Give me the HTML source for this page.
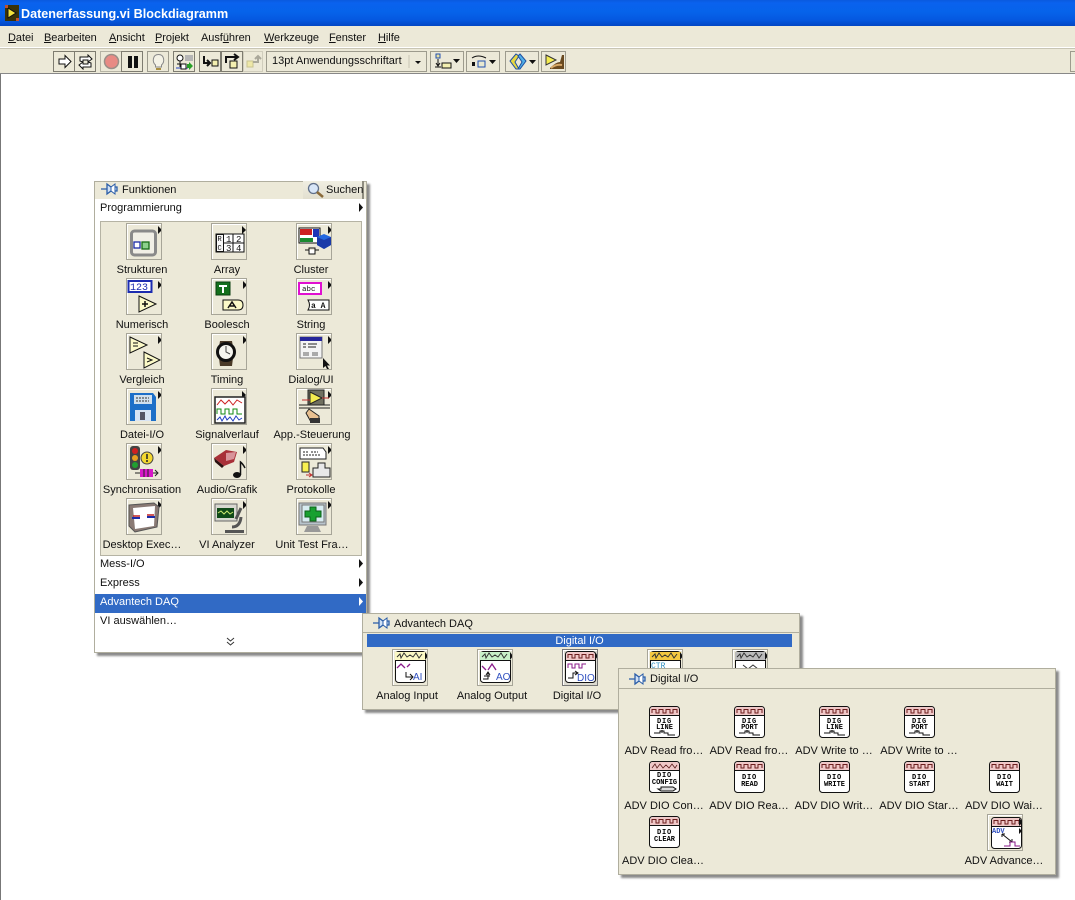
<!DOCTYPE html>
<html lang="de"><head><meta charset="utf-8"><title>Datenerfassung.vi Blockdiagramm</title>
<style>
html,body{margin:0;padding:0;background:#fff}
body{width:1075px;height:900px;position:relative;overflow:hidden;font:11px/14px "Liberation Sans",sans-serif;color:#111}
div,svg,span.a{position:absolute;display:block}
#title{left:0;top:0;width:1075px;height:26px;background:linear-gradient(#0a5ade 0,#0a62ee 3px,#0663ea 12px,#0558e0 20px,#0347c4 26px)}
#title span{position:absolute;left:21px;top:6px;font:bold 12.6px/16px "Liberation Sans",sans-serif;color:#fff;white-space:nowrap}
#menu{left:0;top:26px;width:1075px;height:22px;background:#ece9d8;border-bottom:1px solid #fff;box-sizing:border-box}
#menu span{position:absolute;top:5px;white-space:nowrap;letter-spacing:-.05px}
#tb{left:0;top:48px;width:1075px;height:26px;background:#ece9d8;border-bottom:1px solid #888;border-top:1px solid #c8c5b4;box-sizing:border-box}
#edge{left:0;top:74px;width:1px;height:826px;background:#777}
.k{top:51px;height:21px;background:#ece9d8;border:1px solid #7e7c70;box-sizing:border-box}
.p{background:#ece9d8;box-sizing:border-box;border:1px solid #b0ae9e;box-shadow:3px 3px 2px #8a8a8a}
.hd{background:#ece9d8;border-bottom:1px solid #b0ae9e;box-sizing:border-box}
.t{width:100px;text-align:center;height:14px;white-space:nowrap;margin-top:1px}
.l{white-space:nowrap;margin-top:1px}
.b{width:36px;height:37px;box-sizing:border-box;background:#ece9d8;border:1px solid #a7a598;box-shadow:inset 1px 1px 0 #fff}
.c{width:31px;height:33px}
text{font-family:"Liberation Mono",monospace}
.c text{text-anchor:middle;font-size:7px;font-weight:bold}
.c text.s{letter-spacing:.8px}
.ss{font-family:"Liberation Sans",sans-serif}
</style></head><body>

<svg width="0" height="0" style="position:absolute"><defs>
<symbol id="pin" viewBox="0 0 20 14"><path d="M1 7H7M7 2V12L11 9H17V5H11L7 2Z" fill="#cfe0f5" stroke="#2a5da8" stroke-width="1.3"/><path d="M11 5L15 2V12L11 9Z" fill="#fff" stroke="#2a5da8"/></symbol>
<symbol id="fr" viewBox="0 0 31 33"><rect x=".5" y=".5" width="30" height="31" rx="3" fill="#fff" stroke="#111"/><path d="M1 9V4Q1 1 4 1H27Q30 1 30 4V9Z" fill="#f0c8c8"/><path d="M1 9.500H30" stroke="#111"/><path d="M3 7V3.500H7V7H10V3.500H14V7H17V3.500H21V7H24V3.500H28V7" fill="none" stroke="#6b1d1d"/></symbol>
<symbol id="wire" viewBox="0 0 31 33"><path d="M5 27H11V25H15V27H19V29H26M13 24V27" fill="none" stroke="#111"/></symbol>
</defs></svg>

<div id="title">
<svg style="left:5px;top:5px" width="14" height="16"><rect width="14" height="16" fill="#3a3208"/><path d="M3 3L11 8L3 13Z" fill="#f4e23a" stroke="#111"/><path d="M0 0H3V3H0ZM11 13H14V16H11Z" fill="#c05030"/></svg>
<span>Datenerfassung.vi Blockdiagramm</span></div>

<div id="menu">
<span style="left:8px"><u>D</u>atei</span><span style="left:44px"><u>B</u>earbeiten</span><span style="left:109px"><u>A</u>nsicht</span><span style="left:155px"><u>P</u>rojekt</span><span style="left:201px">Ausf<u>ü</u>hren</span><span style="left:264px"><u>W</u>erkzeuge</span><span style="left:329px"><u>F</u>enster</span><span style="left:378px"><u>H</u>ilfe</span>
</div>
<div id="tb"></div><div id="edge"></div>

<!-- toolbar -->
<div class="k" style="left:53px;width:22px"><svg style="left:3px;top:2px" width="15" height="15"><path d="M2 5H8V1.500L14 7.500L8 13.500V10H2Z" fill="#fff" stroke="#111"/></svg></div>
<div class="k" style="left:74px;width:22px"><svg style="left:2px;top:2px" width="17" height="16"><path d="M3 7V3H11V1L15 5L11 8V6H6V8ZM14 9V13H6V15L2 11L6 8V10H11V8Z" fill="#fff" stroke="#111"/></svg></div>
<div class="k" style="left:100px;width:22px;border-color:#b5b3a4"><svg style="left:2px;top:1px" width="17" height="17"><circle cx="8.500" cy="8.500" r="7" fill="#e88a84" stroke="#9a8f88" stroke-width="1.5"/></svg></div>
<div class="k" style="left:121px;width:22px"><svg style="left:3px;top:2px" width="15" height="15"><path d="M3 2H7V14H3ZM9 2H13V14H9Z" fill="#111"/></svg></div>
<div class="k" style="left:147px;width:22px;border-color:#9d9b8d"><svg style="left:3px;top:1px" width="15" height="18"><path d="M4.500 12C1 9 1.500 1.500 7.500 1.500S14 9 10.500 12V14H4.500Z" fill="#f4f2e6" stroke="#888"/><path d="M5 15H10V17H5Z" fill="#a98f40"/></svg></div>
<div class="k" style="left:173px;width:22px"><svg style="left:1px;top:1px" width="19" height="18"><circle cx="5" cy="5" r="3" fill="#fff" stroke="#111"/><path d="M5 8V14M2 11H8" stroke="#111"/><rect x="10" y="2" width="8" height="6" fill="#b5b5b5"/><path d="M1 15H13" stroke="#2040c0"/><path d="M12 11H14V9L18 13L14 17V15H12Z" fill="#28a028"/><rect x="6" y="11" width="5" height="5" fill="#fff" stroke="#111"/></svg></div>
<div class="k" style="left:199px;width:22px"><svg style="left:2px;top:2px" width="18" height="15"><path d="M2 2V9H7M5 6L8 9L5 12" fill="none" stroke="#111" stroke-width="2"/><rect x="10" y="6" width="6" height="6" fill="#f3efb0" stroke="#111"/></svg></div>
<div class="k" style="left:221px;width:22px"><svg style="left:2px;top:1px" width="18" height="17"><path d="M2 10V4H13M10 1L14 4L10 7" fill="none" stroke="#111" stroke-width="2"/><rect x="6" y="8" width="7" height="7" fill="#f3efb0" stroke="#111"/></svg></div>
<div class="k" style="left:243px;width:20px;border-color:#d0cdbc"><svg style="left:1px;top:2px" width="18" height="15"><rect x="2" y="7" width="6" height="6" fill="#eee8a8" stroke="#c8c490"/><path d="M8 8H13V3M10 5L13 2L16 5" fill="none" stroke="#aaa89a" stroke-width="2"/></svg></div>
<div class="k" style="left:266px;width:161px;border-color:#9d9b8d"><span class="a" style="left:5px;top:2px;font-size:11px;white-space:nowrap">13pt Anwendungsschriftart</span><svg style="left:141px;top:1px" width="18" height="17"><path d="M1 2V15" stroke="#c8c5b4"/><path d="M7 8H13L10 11Z" fill="#111"/></svg></div>
<div class="k" style="left:430px;width:34px;border-color:#9d9b8d"><svg style="left:3px;top:1px" width="28" height="18"><rect x="2" y="1" width="4" height="4" fill="#e8e0a0" stroke="#2050b0"/><path d="M4 6V13M1 14H7M2 10L4 13L6 10" fill="none" stroke="#111"/><rect x="8" y="10" width="9" height="5" fill="#f3efb0" stroke="#111"/><path d="M19 6H26L22.500 10Z" fill="#111"/></svg></div>
<div class="k" style="left:466px;width:34px;border-color:#9d9b8d"><svg style="left:3px;top:1px" width="28" height="18"><path d="M2 5Q8 1 16 5" fill="none" stroke="#111"/><rect x="2" y="9" width="3" height="4" fill="#111"/><rect x="8" y="8" width="7" height="6" fill="#e8e8d0" stroke="#2050b0"/><path d="M19 7H26L22.500 11Z" fill="#111"/></svg></div>
<div class="k" style="left:505px;width:34px;border-color:#9d9b8d"><svg style="left:2px;top:1px" width="30" height="18"><path d="M8 1L2 8L8 16H11L7 9L11 3Z" fill="#e8d840" stroke="#2050a0"/><path d="M12 1L18 8L12 16H10L14 9L10 3Z" fill="#50b0e8" stroke="#2050a0"/><path d="M21 7H28L24.500 11Z" fill="#111"/></svg></div>
<div class="k" style="left:541px;width:25px;border-color:#9d9b8d"><svg style="left:1px;top:1px" width="22" height="18"><path d="M3 2L13 7L3 12Z" fill="#f4ec50" stroke="#333"/><path d="M7 15Q13 9 17 9L19 2H21V16H7Z" fill="#6a4a20"/><path d="M8 15Q13 11 19 12" stroke="#d8a868" stroke-width="2" fill="none"/></svg></div>
<div class="k" style="left:1070px;width:8px;border-color:#9d9b8d"></div>

<!-- Funktionen palette -->
<div class="p" style="left:94px;top:181px;width:273px;height:472px;background:#fff"></div>
<div class="hd" style="left:95px;top:182px;width:271px;height:17px;border:0"></div>
<svg style="left:100px;top:182px" width="20" height="14"><use href="#pin"/></svg>
<div class="l" style="left:122px;top:182px">Funktionen</div>
<div style="left:303px;top:181px;width:61px;height:18px;background:linear-gradient(#f0eee2,#e2dfcf);border-right:2px solid #8f8d80;box-sizing:border-box"></div>
<svg style="left:307px;top:182px" width="18" height="17"><circle cx="6.500" cy="6.500" r="5" fill="#d8e6f8" stroke="#5f6f8a" stroke-width="1.300"/><path d="M10 10L16 15" stroke="#8a6a3a" stroke-width="2.500"/></svg>
<div class="l" style="left:326px;top:182px">Suchen</div>
<div class="l" style="left:100px;top:200px">Programmierung</div>
<svg style="left:358px;top:203px" width="6" height="9"><path d="M1 0L5 4.500L1 9Z" fill="#111"/></svg>
<div style="left:100px;top:221px;background:#ece9d8;border:1px solid #b5b3a4;width:260px;height:333px"></div>

<!-- row 1 -->
<svg class="b" style="left:126px;top:223px"><path d="M31 2L35 6L31 10Z" fill="#111"/><rect x="4.500" y="7" width="24" height="24" rx="3" fill="#f1efe6" stroke="#8a8a8a" stroke-width="3"/><rect x="7" y="18" width="6" height="6" fill="#fff" stroke="#1c2ca8" stroke-width="1.300"/><rect x="15" y="18" width="7" height="7" fill="#8cd08c" stroke="#146a14" stroke-width="1.300"/></svg>
<svg class="b" style="left:211px;top:223px"><path d="M30 2L34 6L30 10Z" fill="#111"/><rect x="4" y="10" width="28" height="18" fill="#fff" stroke="#111"/><path d="M11.500 10V28M21 10V28M4 19H32" stroke="#111"/><rect x="4.500" y="10.500" width="7" height="17" fill="#f8f8f8" stroke="#111"/><text x="5.500" y="17" font-size="7" fill="#111">R</text><text x="5.500" y="26" font-size="7" fill="#111">C</text><text x="14" y="18" font-size="9" fill="#111">1</text><text x="24" y="18" font-size="9" fill="#111">2</text><text x="14" y="27" font-size="9" fill="#111">3</text><text x="24" y="27" font-size="9" fill="#111">4</text></svg>
<svg class="b" style="left:296px;top:223px"><path d="M31 2L35 6L31 10Z" fill="#111"/><rect x="2" y="4" width="21" height="15" fill="#fff" stroke="#111"/><rect x="3" y="5" width="12" height="6" fill="#cc2020"/><rect x="16" y="5" width="6" height="8" fill="#1d36b8"/><rect x="3" y="14" width="13" height="4" fill="#198a30"/><path d="M8 26H12V24H18V26H22M12 24V30H18V24" fill="#fff" stroke="#111"/><path d="M20 13L27 10L34 13V21L27 25L20 21Z" fill="#2468e0"/><path d="M20 13L27 16L34 13V21L27 25L20 21Z" fill="#1a3aa8"/></svg>
<!-- row 2 -->
<svg class="b" style="left:126px;top:278px"><path d="M31 2L35 6L31 10Z" fill="#111"/><rect x="1.500" y="2" width="23" height="11" fill="#fff" stroke="#1c2cb0" stroke-width="2"/><text x="3" y="11" font-size="10" fill="#1c2cb0">123</text><path d="M12 17L29 25L12 33Z" fill="#fcfac8" stroke="#111"/><path d="M15 25H21M18 22V28" stroke="#111" stroke-width="1.500"/></svg>
<svg class="b" style="left:211px;top:278px"><path d="M31 2L35 6L31 10Z" fill="#111"/><rect x="4" y="3" width="14" height="13" fill="#14701c" stroke="#0a400f"/><path d="M7 6H15V8H12V14H10V8H7Z" fill="#fff"/><path d="M11 21H26Q31 21 31 26T26 31H11Z" fill="#fcfac8" stroke="#111"/><path d="M16 29L20 23L24 29M18 27H22" fill="none" stroke="#111" stroke-width="1.500"/></svg>
<svg class="b" style="left:296px;top:278px"><path d="M31 2L35 6L31 10Z" fill="#111"/><rect x="2" y="4" width="22" height="11" fill="#fff" stroke="#e010d0" stroke-width="2"/><text x="5" y="12" font-size="7.500" fill="#111">abc</text><path d="M11 21H32V31H11Q14 26 11 21Z" fill="#fff" stroke="#111"/><text x="14" y="29" font-size="8" font-weight="bold" fill="#111">a A</text></svg>
<!-- row 3 -->
<svg class="b" style="left:126px;top:333px"><path d="M31 2L35 6L31 10Z" fill="#111"/><path d="M3 3L20 11L3 19Z" fill="#fcfac8" stroke="#111"/><path d="M6 9H11M6 12H11" stroke="#111"/><path d="M17 18L33 26L17 34Z" fill="#fcfac8" stroke="#111"/><path d="M20 24L25 26L20 28" fill="none" stroke="#111"/></svg>
<svg class="b" style="left:211px;top:333px"><path d="M31 2L35 6L31 10Z" fill="#111"/><path d="M8 7H20L21 13H7ZM7 24H21L20 32H8Z" fill="#4a3a28"/><circle cx="14" cy="18" r="8.500" fill="#f5f5ef" stroke="#111" stroke-width="3"/><path d="M14 12V18L18 20" stroke="#444" fill="none"/></svg>
<svg class="b" style="left:296px;top:333px"><path d="M31 2L35 6L31 10Z" fill="#111"/><rect x="3" y="3" width="22" height="21" fill="#f4f4f4" stroke="#777"/><rect x="3" y="3" width="22" height="4" fill="#26269a"/><path d="M6 10H9M11 10H20M6 13H9M11 13H19" stroke="#222"/><rect x="6" y="18" width="6" height="4" fill="#aaa"/><rect x="15" y="18" width="6" height="4" fill="#aaa"/><path d="M26 24V34L28.500 32L30.500 36L32 35L30 31.500H33Z" fill="#111"/></svg>
<!-- row 4 -->
<svg class="b" style="left:126px;top:388px"><path d="M31 2L35 6L31 10Z" fill="#111"/><path d="M3 4H26L29 8V32H3Z" fill="#1c6fc8"/><rect x="7" y="6" width="18" height="9" fill="#cfe0ee"/><path d="M9 9H22M9 12H22" stroke="#333" stroke-dasharray="2 1"/><rect x="8" y="21" width="16" height="11" fill="#d8e4f4"/><rect x="13" y="23" width="5" height="8" fill="#556"/></svg>
<svg class="b" style="left:211px;top:388px"><path d="M30 2L34 6L30 10Z" fill="#111"/><rect x="3" y="8" width="30" height="26" fill="#fff" stroke="#222" stroke-width="1.500"/><path d="M5 16L9 11L13 15L17 11L21 16L25 11L30 14" fill="none" stroke="#cc2020"/><path d="M5 25V20H9V25H13V20H17V25H21V20H25V25H30" fill="none" stroke="#108a10"/><path d="M5 31L8 28L10 32L13 27L15 31L18 28L21 32L24 27L27 31L30 29" fill="none" stroke="#2040c0"/></svg>
<svg class="b" style="left:296px;top:388px"><path d="M31 2L35 6L31 10Z" fill="#111"/><rect x="11" y="1" width="16" height="15" fill="#707060" stroke="#222"/><path d="M13 3L25 9L13 15Z" fill="#f4ec50" stroke="#222"/><path d="M5 11H13M25 9H32" stroke="#c03030"/><path d="M2 16H33M2 19H33" stroke="#222"/><path d="M12 20L22 27V33H14L9 24Z" fill="#e8c090" stroke="#222"/><rect x="13" y="29" width="10" height="5" fill="#333"/></svg>
<!-- row 5 -->
<svg class="b" style="left:126px;top:443px"><path d="M31 2L35 6L31 10Z" fill="#111"/><rect x="3" y="2" width="10" height="24" rx="3" fill="#444"/><circle cx="8" cy="7" r="3" fill="#d02020"/><circle cx="8" cy="14" r="3" fill="#e8a020"/><circle cx="8" cy="21" r="3" fill="#20a030"/><circle cx="20" cy="14" r="6" fill="#f4d830" stroke="#444"/><path d="M20 10V15M20 16V18" stroke="#222" stroke-width="1.500"/><path d="M8 29H13M26 29H31M28 26L31 29L28 32" fill="none" stroke="#222"/><rect x="13" y="25" width="13" height="8" fill="#d818c8"/><path d="M17 25V33M21 25V33" stroke="#222"/></svg>
<svg class="b" style="left:211px;top:443px"><path d="M31 2L35 6L31 10Z" fill="#111"/><path d="M2 14L14 6L25 8L22 18L12 22Z" fill="#a83038"/><path d="M14 9L24 8L22 15L14 17Z" fill="#d8949a"/><path d="M2 14L12 22L10 24L3 18Z" fill="#2a1010"/><ellipse cx="25" cy="31" rx="4" ry="3" fill="#111"/><path d="M28.500 31V18Q31 20 33 24" fill="none" stroke="#111" stroke-width="1.500"/></svg>
<svg class="b" style="left:296px;top:443px"><path d="M31 2L35 6L31 10Z" fill="#111"/><path d="M3 4H26L29 8V15H3Z" fill="#fff" stroke="#222"/><path d="M6 8H12M14 8H21M6 11H23" stroke="#222" stroke-dasharray="2 1"/><path d="M5 18H12V28H5Z" fill="#f8f050" stroke="#222"/><path d="M9 31H14M12 29L15 31L12 33" fill="none" stroke="#c03030"/><path d="M21 19H28V24H33V33H16V24H21Z" fill="#e8e8e8" stroke="#222"/></svg>
<!-- row 6 -->
<svg class="b" style="left:126px;top:498px"><path d="M31 2L35 6L31 10Z" fill="#111"/><path d="M2 6L27 4L32 8L30 28L8 33L2 27Z" fill="#8a7a74" stroke="#555"/><path d="M6 9L28 7L27 27L8 30Z" fill="#fff"/><path d="M5 19H13M20 18H28" stroke="#1c2ca8" stroke-width="2"/><path d="M6 17H13M20 16H27" stroke="#c02020" stroke-width="1.500"/></svg>
<svg class="b" style="left:211px;top:498px"><path d="M31 2L35 6L31 10Z" fill="#111"/><rect x="3" y="5" width="22" height="17" fill="#d8d8d0" stroke="#666"/><rect x="5" y="9" width="17" height="10" fill="#104a18"/><path d="M6 14L9 12L12 15L15 12L18 15L21 13" stroke="#cce870" fill="none"/><path d="M29 9L24 20M20 28Q28 28 29 18" stroke="#555" stroke-width="3" fill="none"/><path d="M13 31H32V34H13Z" fill="#555"/></svg>
<svg class="b" style="left:296px;top:498px"><path d="M31 2L35 6L31 10Z" fill="#111"/><path d="M2 4H29V26H2Z" fill="#b8c4cc" stroke="#777"/><rect x="5" y="6" width="22" height="17" fill="#d8ecf2" stroke="#777"/><path d="M13 8H19V12H24V18H19V22H13V18H8V12H13Z" fill="#18a030" stroke="#0b6018"/><path d="M10 27H21L24 33H7Z" fill="#999"/></svg>
<div class="t" style="left:92px;top:262px">Strukturen</div><div class="t" style="left:177px;top:262px">Array</div><div class="t" style="left:261px;top:262px">Cluster</div>
<div class="t" style="left:92px;top:317px">Numerisch</div><div class="t" style="left:177px;top:317px">Boolesch</div><div class="t" style="left:261px;top:317px">String</div>
<div class="t" style="left:92px;top:372px">Vergleich</div><div class="t" style="left:177px;top:372px">Timing</div><div class="t" style="left:261px;top:372px">Dialog/UI</div>
<div class="t" style="left:92px;top:427px">Datei-I/O</div><div class="t" style="left:177px;top:427px">Signalverlauf</div><div class="t" style="left:262px;top:427px">App.-Steuerung</div>
<div class="t" style="left:92px;top:482px">Synchronisation</div><div class="t" style="left:177px;top:482px">Audio/Grafik</div><div class="t" style="left:261px;top:482px">Protokolle</div>
<div class="t" style="left:92px;top:537px">Desktop Exec…</div><div class="t" style="left:177px;top:537px">VI Analyzer</div><div class="t" style="left:262px;top:537px">Unit Test Fra…</div>

<div class="l" style="left:100px;top:556px">Mess-I/O</div>
<svg style="left:358px;top:559px" width="6" height="9"><path d="M1 0L5 4.500L1 9Z" fill="#111"/></svg>
<div class="l" style="left:100px;top:575px">Express</div>
<svg style="left:358px;top:578px" width="6" height="9"><path d="M1 0L5 4.500L1 9Z" fill="#111"/></svg>
<div style="left:95px;top:594px;width:271px;height:19px;background:#316ac5"></div>
<div class="l" style="left:100px;top:594px;color:#fff">Advantech DAQ</div>
<svg style="left:358px;top:597px" width="6" height="9"><path d="M1 0L5 4.500L1 9Z" fill="#fff"/></svg>
<div class="l" style="left:100px;top:613px">VI auswählen…</div>
<svg style="left:226px;top:637px" width="9" height="9"><path d="M1 1L4.500 4L8 1M1 5L4.500 8L8 5" fill="none" stroke="#333"/></svg>

<!-- Advantech DAQ palette -->
<div class="p" style="left:362px;top:613px;width:438px;height:97px"></div>
<div class="hd" style="left:363px;top:614px;width:436px;height:19px"></div>
<svg style="left:372px;top:616px" width="20" height="14"><use href="#pin"/></svg>
<div class="l" style="left:394px;top:616px">Advantech DAQ</div>
<div style="left:367px;top:634px;width:425px;height:13px;background:#316ac5;color:#fff;text-align:center;line-height:15px;overflow:hidden">Digital I/O</div>
<svg class="b" style="left:392px;top:649px"><use href="#fr" x="1" y="1" width="33" height="33"/><rect x="2" y="2" width="31" height="8" fill="#fbf8c4"/><path d="M4 7L7 4L8 8L11 3L14 7L17 5L20 7L23 3L26 8L29 4" fill="none" stroke="#333"/><path d="M2 10.500H33" stroke="#111"/><path d="M4 18L8 14L12 18M14 17L17 14" fill="none" stroke="#8a1a8a" stroke-width="1.300"/><path d="M13 22V27H20M17 24L20 27L17 30" fill="none" stroke="#111"/><text class="ss" x="20" y="30" font-size="10" fill="#3050c0">AI</text><path d="M32 2L35 6L32 10Z" fill="#111"/></svg>
<svg class="b" style="left:477px;top:649px"><use href="#fr" x="1" y="1" width="33" height="33"/><rect x="2" y="2" width="31" height="8" fill="#c8f0c8"/><path d="M4 7L7 4L8 8L11 3L14 7L17 5L20 7L23 3L26 8L29 4" fill="none" stroke="#333"/><path d="M2 10.500H33" stroke="#111"/><path d="M4 16L8 20M10 20L14 14L18 20" fill="none" stroke="#8a1a8a" stroke-width="1.300"/><path d="M5 29H10V23M8 25L10 22L12 25M6 26H12" fill="none" stroke="#111"/><text class="ss" x="18" y="30" font-size="10" fill="#3050c0">AO</text><path d="M32 2L35 6L32 10Z" fill="#111"/></svg>
<svg class="b" style="left:562px;top:649px;background:#dcdad0;border-color:#777"><use href="#fr" x="1" y="1" width="33" height="33"/><path d="M5 18V14H9V18H12V14H16V18H19V14H23" fill="none" stroke="#8a1a8a"/><path d="M5 28H10V23H14M12 21L15 23L12 25" fill="none" stroke="#111"/><text class="ss" x="14" y="31" font-size="10" fill="#3050c0">DIO</text><path d="M32 2L35 6L32 10Z" fill="#111"/></svg>
<svg class="b" style="left:647px;top:649px"><use href="#fr" x="1" y="1" width="33" height="33"/><rect x="2" y="2" width="31" height="8" fill="#f4c840"/><path d="M4 7L7 4L8 8L11 3L14 7L17 5L20 7L23 3L26 8L29 4" fill="none" stroke="#333"/><path d="M2 10.500H33" stroke="#111"/><text x="3" y="18" font-size="8" fill="#3090c0">CTR</text><path d="M32 2L35 6L32 10Z" fill="#111"/></svg>
<svg class="b" style="left:732px;top:649px"><use href="#fr" x="1" y="1" width="33" height="33"/><rect x="2" y="2" width="31" height="8" fill="#bbbbbb"/><path d="M4 7L7 4L8 8L11 3L14 7L17 5L20 7L23 3L26 8L29 4" fill="none" stroke="#333"/><path d="M2 10.500H33" stroke="#111"/><path d="M10 15L15 19L20 15L25 19" fill="none" stroke="#333"/><path d="M32 2L35 6L32 10Z" fill="#111"/></svg>
<div class="t" style="left:357px;top:688px">Analog Input</div><div class="t" style="left:442px;top:688px">Analog Output</div><div class="t" style="left:527px;top:688px">Digital I/O</div>

<!-- Digital I/O palette -->
<div class="p" style="left:618px;top:668px;width:438px;height:207px"></div>
<div class="hd" style="left:619px;top:669px;width:436px;height:20px"></div>
<svg style="left:628px;top:672px" width="20" height="14"><use href="#pin"/></svg>
<div class="l" style="left:650px;top:671px">Digital I/O</div>

<svg class="c" style="left:649px;top:706px"><use href="#fr"/><use href="#wire"/><text class="s" x="15.500" y="17">DIG</text><text x="15.500" y="23">LINE</text></svg>
<svg class="c" style="left:734px;top:706px"><use href="#fr"/><use href="#wire"/><text class="s" x="15.500" y="17">DIG</text><text x="15.500" y="23">PORT</text></svg>
<svg class="c" style="left:819px;top:706px"><use href="#fr"/><use href="#wire"/><text class="s" x="15.500" y="17">DIG</text><text x="15.500" y="23">LINE</text></svg>
<svg class="c" style="left:904px;top:706px"><use href="#fr"/><use href="#wire"/><text class="s" x="15.500" y="17">DIG</text><text x="15.500" y="23">PORT</text></svg>
<svg class="c" style="left:649px;top:761px"><use href="#fr"/><rect x="2" y="2" width="27" height="7" fill="#f0c8c8"/><path d="M3 7L6 3L8 7L11 3L14 7L17 4L20 7L23 3L26 7L28 4" fill="none" stroke="#5b1b1b" stroke-width=".8"/><text class="s" x="15.500" y="16">DIO</text><text x="15.500" y="23">CONFIG</text><path d="M9 28H12V26H24L27 28L24 30H12Z" fill="#ddd" stroke="#111"/></svg>
<svg class="c" style="left:734px;top:761px"><use href="#fr"/><text class="s" x="15.500" y="18">DIO</text><text x="15.500" y="25">READ</text></svg>
<svg class="c" style="left:819px;top:761px"><use href="#fr"/><text class="s" x="15.500" y="18">DIO</text><text x="15.500" y="25">WRITE</text></svg>
<svg class="c" style="left:904px;top:761px"><use href="#fr"/><text class="s" x="15.500" y="18">DIO</text><text x="15.500" y="25">START</text></svg>
<svg class="c" style="left:989px;top:761px"><use href="#fr"/><text class="s" x="15.500" y="18">DIO</text><text x="15.500" y="25">WAIT</text></svg>
<svg class="c" style="left:649px;top:816px"><use href="#fr"/><text class="s" x="15.500" y="18">DIO</text><text x="15.500" y="25">CLEAR</text></svg>
<svg class="b" style="left:987px;top:814px"><use href="#fr" x="2" y="2" width="33" height="33"/><path d="M31 3L35 7L31 11ZM31 13L34 16L31 19Z" fill="#111"/><text x="4" y="18" font-size="7" font-weight="bold" fill="#3050c0">ADV</text><path d="M14 19L24 27M14 19H17M14 19V22M24 27H21M24 27V24" fill="none" stroke="#111"/><path d="M16 31H22V27H27V31H32" fill="none" stroke="#8a1a8a"/></svg>

<div class="t" style="left:614px;top:743px">ADV Read fro…</div><div class="t" style="left:699px;top:743px">ADV Read fro…</div><div class="t" style="left:784px;top:743px">ADV Write to …</div><div class="t" style="left:869px;top:743px">ADV Write to …</div>
<div class="t" style="left:614px;top:798px">ADV DIO Con…</div><div class="t" style="left:699px;top:798px">ADV DIO Rea…</div><div class="t" style="left:784px;top:798px">ADV DIO Writ…</div><div class="t" style="left:869px;top:798px">ADV DIO Star…</div><div class="t" style="left:954px;top:798px">ADV DIO Wai…</div>
<div class="t" style="left:613px;top:853px">ADV DIO Clea…</div><div class="t" style="left:954px;top:853px">ADV Advance…</div>
</body></html>
